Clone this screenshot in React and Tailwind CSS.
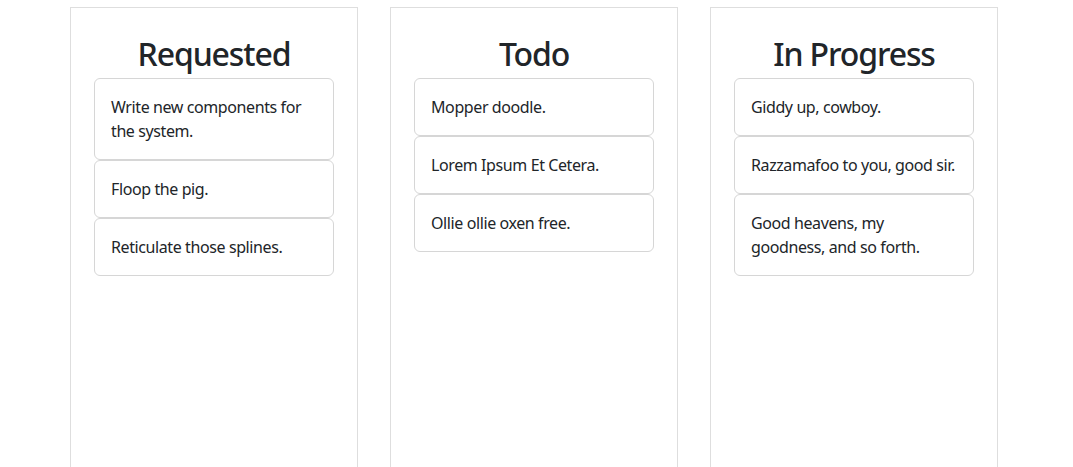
const columns = [
  {
    title: "Requested",
    items: ["Write new components for the system.", "Floop the pig.", "Reticulate those splines."],
  },
  {
    title: "Todo",
    items: ["Mopper doodle.", "Lorem Ipsum Et Cetera.", "Ollie ollie oxen free."],
  },
  {
    title: "In Progress",
    items: ["Giddy up, cowboy.", "Razzamafoo to you, good sir.", "Good heavens, my goodness, and so forth."],
  },
];

export default function App() {
  return (
    <main className="min-h-screen overflow-hidden bg-white font-['Noto_Sans',sans-serif] text-[#212529]">
      <div className="flex gap-8 pl-[70px] pt-[7px]">
        {columns.map((col) => (
          <section
            key={col.title}
            className="h-[480px] w-[288px] shrink-0 border border-[#dedede] px-[23px] pt-[27px]"
          >
            <h2 className="mb-[5px] text-center text-[32px] font-medium leading-[38px] tracking-[-0.035em]">
              {col.title}
            </h2>
            <div className="flex flex-col">
              {col.items.map((item) => (
                <div
                  key={item}
                  className="rounded-md border border-[#d6d6d6] p-4 text-base leading-6 tracking-[-0.025em]"
                >
                  {item}
                </div>
              ))}
            </div>
          </section>
        ))}
      </div>
    </main>
  );
}
